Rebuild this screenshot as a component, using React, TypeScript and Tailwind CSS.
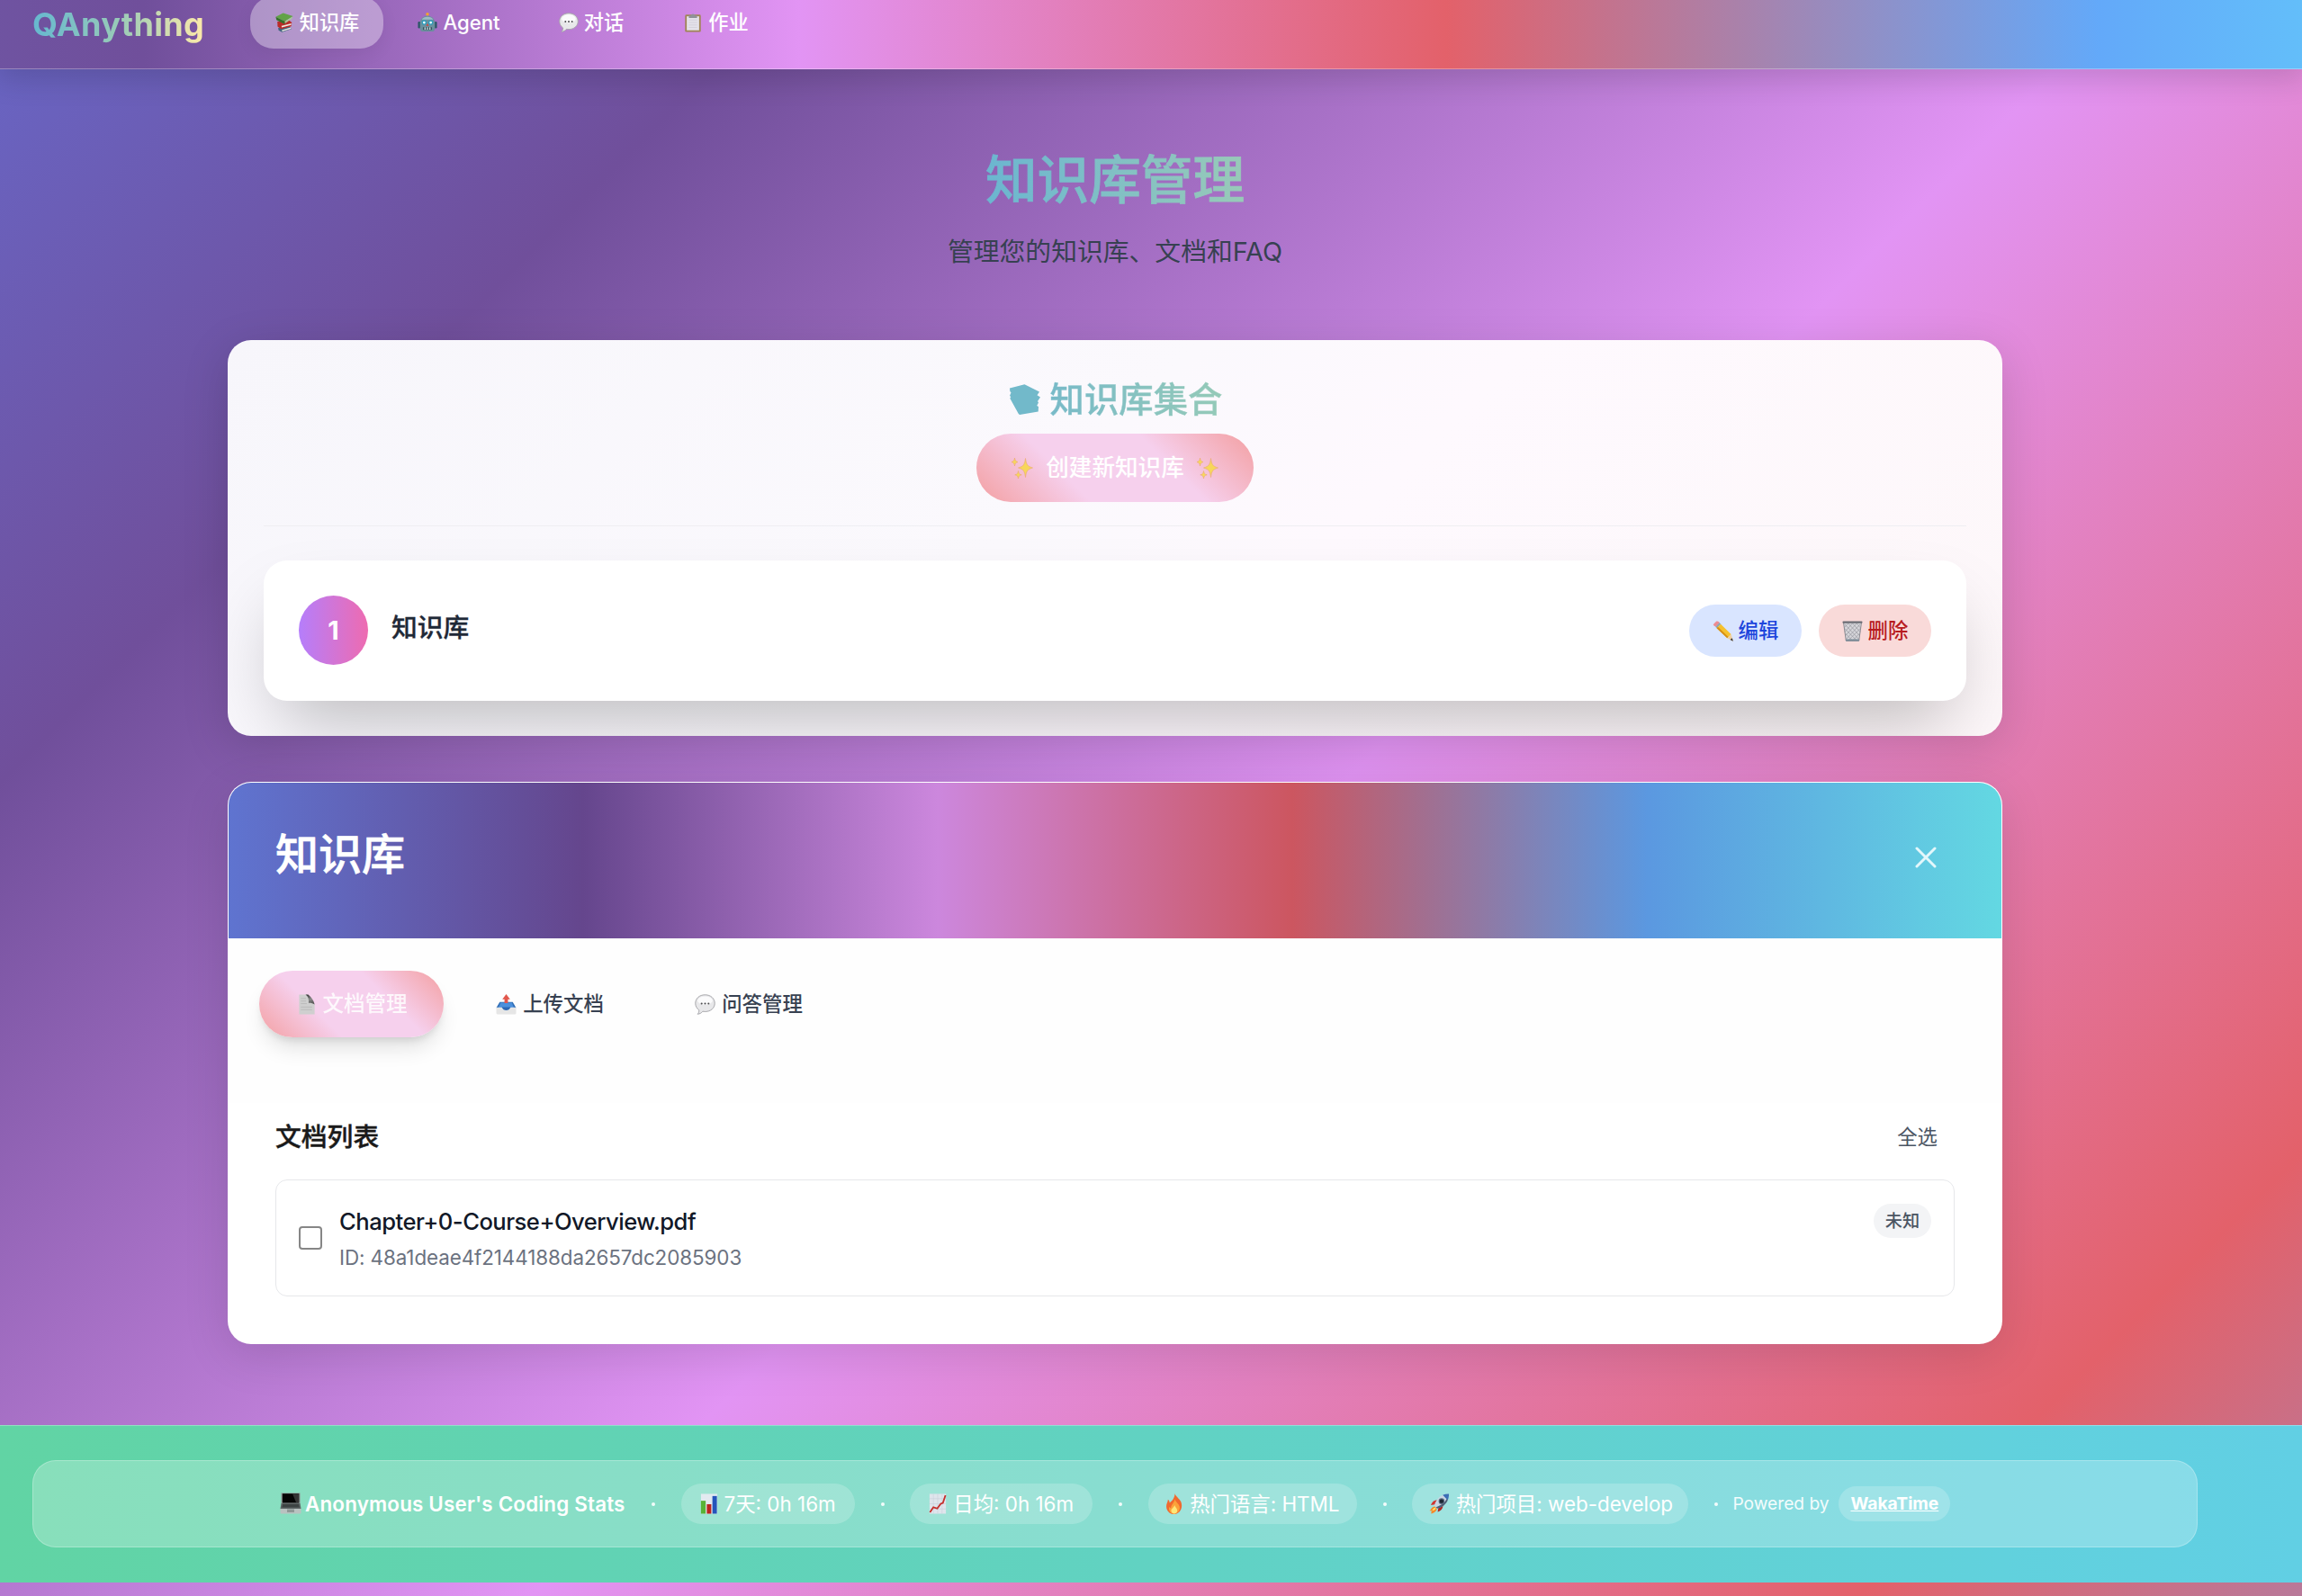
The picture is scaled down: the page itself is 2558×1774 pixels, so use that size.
import React from "react";

type IconProps = { className?: string };

const Books = ({ className }: IconProps) => (
  <svg viewBox="0 0 24 24" className={className}>
    <path d="M4.500 18.500 18 15.500l2.500 4.500L9 23.800 5 21.500z" fill="#41657f" />
    <path d="M9 21.200 19.500 18l.6 1.600L9.300 23z" fill="#e6e3dc" />
    <path d="M3.500 11 18 9.500l3 2.500-.8 4.500L8 19.800 3.800 17z" fill="#b92c29" />
    <path d="M8.500 16.200 20.500 13.200l-.4 1.800L8.800 18z" fill="#efe9df" />
    <path d="M1.500 5.200 10.500.5l12 3.800-10 6.400z" fill="#62a347" />
    <path d="M1.500 5.200 12.500 10.700v3.500L2.500 9z" fill="#35702a" />
    <path d="M12.500 10.700 22 4.800l-.8 2.600L12.900 13z" fill="#a9c79b" />
  </svg>
);

const Robot = ({ className }: IconProps) => (
  <svg viewBox="0 0 24 24" className={className}>
    <rect x="11.2" y="2" width="1.6" height="4" fill="#8a949b" />
    <circle cx="12" cy="2" r="1.9" fill="#f2a330" />
    <rect x="0.5" y="11" width="3" height="8" rx="1.4" fill="#2c5566" />
    <rect x="20.5" y="11" width="3" height="8" rx="1.4" fill="#2c5566" />
    <path d="M3 12a9 8 0 0 1 18 0v7a4 4 0 0 1-4 4H7a4 4 0 0 1-4-4z" fill="#6a909e" />
    <path d="M5 8.500a7.500 5 0 0 1 14 0z" fill="#9dbcc6" />
    <circle cx="8" cy="12" r="2.900" fill="#2f9dbd" />
    <circle cx="16" cy="12" r="2.900" fill="#2f9dbd" />
    <circle cx="8" cy="12" r="1.500" fill="#f0ffff" />
    <circle cx="16" cy="12" r="1.500" fill="#f0ffff" />
    <path d="m12 13 1.600 3h-3.200z" fill="#d2453a" />
    <rect x="6.500" y="17.500" width="11" height="3.600" rx="1" fill="#3a5661" />
    <path d="M9 17.800v3M12 17.800v3M15 17.800v3" stroke="#d6e6ea" strokeWidth="1.300" />
  </svg>
);

const Bubble = ({ className }: IconProps) => (
  <svg viewBox="0 0 24 24" className={className}>
    <path
      d="M12 .8C5.500.8.8 5 .8 10.600c0 3.400 1.600 6 4.200 7.900.2 1.900-.6 3.600-1.700 4.700 2.400-.1 4.600-1.400 6-3.200.9.2 1.800.3 2.700.3 6.500 0 11.200-4.200 11.200-9.700S18.500.8 12 .8z"
      fill="#e8e8ea"
      stroke="#a4a4a8"
      strokeWidth="1"
    />
    <ellipse cx="12" cy="7.500" rx="8.500" ry="5" fill="#fbfbfc" />
    <circle cx="8" cy="11" r="1.100" fill="#4c4c50" />
    <circle cx="12" cy="11" r="1.100" fill="#4c4c50" />
    <circle cx="16" cy="11" r="1.100" fill="#4c4c50" />
  </svg>
);

const Clipboard = ({ className }: IconProps) => (
  <svg viewBox="0 0 24 24" className={className}>
    <rect x="2.500" y="2.500" width="19" height="21" rx="1.500" fill="#a08556" />
    <rect x="4.500" y="4.500" width="15" height="17" fill="#e4e2ea" />
    <path d="M7 9h10M7 12h10M7 15h10M7 18h10" stroke="#d3d0da" strokeWidth="1" />
    <path d="M7 3.500h2.500a2.600 2.600 0 0 1 5 0H17V6.500H7z" fill="#8f9298" />
  </svg>
);

const Sparkles = ({ className }: IconProps) => (
  <svg viewBox="0 0 24 24" className={className} fill="#f8d94e" stroke="#eaaa6c" strokeWidth="0.700">
    <path d="M15.500 1.500c.9 6.500 2 8.800 8 10.500-6 1.700-7.100 4-8 10.500-.9-6.500-2-8.800-8-10.500 6-1.700 7.100-4 8-10.500z" />
    <path d="M3.500 1c.4 2.700 1 3.700 3.500 4.500-2.500.8-3.100 1.800-3.500 4.500C3.100 7.300 2.500 6.300 0 5.500 2.500 4.700 3.100 3.700 3.500 1z" />
    <path d="M7.500 15.500c.5 2.700 1 3.600 3.700 4.300-2.700.7-3.200 1.500-3.700 4.200-.5-2.700-1-3.500-3.700-4.200 2.700-.7 3.200-1.600 3.700-4.300z" />
  </svg>
);

const Pencil = ({ className }: IconProps) => (
  <svg viewBox="0 0 24 24" className={className}>
    <path d="M1.200 3.800 4.200.9c1-.7 2.300-.4 3.100.4l1 1L3.700 7l-1.600-1C1 5.300.6 4.500 1.200 3.800z" fill="#ee8c92" />
    <path d="M3.400 7 8 2.200l1.700 1.600L5 8.600z" fill="#8fa5b3" />
    <path d="M4.800 8.600 9.500 3.800 21.500 15.600 17 20z" fill="#f6c12d" />
    <path d="M4.800 8.600 6.200 7.100 18.400 18.700 17 20z" fill="#d68f16" />
    <path d="m21.500 15.600 2.300 8.100L17 20z" fill="#f0cf9e" />
    <path d="m22.800 20.200 1 3.500-3.400-1.800z" fill="#3d3a38" />
  </svg>
);

const Basket = ({ className }: IconProps) => (
  <svg viewBox="0 0 24 24" className={className}>
    <path d="M1.500 1.500h21L19.500 23h-15z" fill="#d6d6da" />
    <path
      d="M3 4l16 17M7 3l13 14M12 3l9 10M17 3l4 5M3 9l14 14M4 15l8 8M21 4 5 21M17 3 4 17M12 3 3 13M7 3 2.500 8M21 9 7 23M20 15l-8 8"
      stroke="#9a9aa2"
      strokeWidth="0.800"
    />
    <path d="M1.500 1.500 4.500 23h15l3-21.500" fill="none" stroke="#84858c" strokeWidth="1" />
    <rect x="0.500" y="0.500" width="23" height="2.300" rx="1" fill="#6b6d74" />
    <rect x="4" y="21.500" width="16" height="2.200" rx="1" fill="#7d8c98" />
  </svg>
);

const Page = ({ className }: IconProps) => (
  <svg viewBox="0 0 20 24" className={className}>
    <defs>
      <linearGradient id="curl" x1="0.300" y1="0" x2="0.600" y2="1">
        <stop offset="0" stopColor="#3c3c3c" />
        <stop offset="0.500" stopColor="#8a8a8a" />
        <stop offset="1" stopColor="#505050" />
      </linearGradient>
    </defs>
    <path d="M1 .5h10L19 12v11.500H1z" fill="#cfcfcf" />
    <path d="M3 5h6M3 8h6M3 11h7M3 15h13M3 18h13" stroke="#bababa" strokeWidth="1" />
    <path d="M8.500.5h3c3 2.500 6.500 6.500 7.500 11.500-2-1.500-4.500-2-7-1.800C12.500 6 11.500 2.500 8.500.5z" fill="url(#curl)" />
  </svg>
);

const Outbox = ({ className }: IconProps) => (
  <svg viewBox="0 0 24 24" className={className}>
    <path d="M4.500 9h15l4 7H.5z" fill="#2f6db5" />
    <path d="M5.500 10h13l2.500 6H3z" fill="#4c90dc" />
    <path d="M12 0 16.500 6H14v4.500h-4V6H7.500z" fill="#e2574c" />
    <path d="M.5 15.500h6.500c1 4 9 4 10 0h6.500V22a1.500 1.500 0 0 1-1.500 1.500H2A1.500 1.500 0 0 1 .5 22z" fill="#e6e6e6" />
    <path d="M7 15h10c-1.500 5-8.500 5-10 0z" fill="#2d68b4" />
  </svg>
);

const Laptop = ({ className }: IconProps) => (
  <svg viewBox="0 0 24 24" className={className}>
    <path d="M1.500.5h21V12h-21z" fill="#8c9292" />
    <path d="M2.800 1.200h18.400V11.500H2.800z" fill="#050505" />
    <path d="M14 1.200h7.200V11H18z" fill="#343434" />
    <path d="M1.500 12h21l1 6H.5z" fill="#5e6666" />
    <path d="M3 13h18l.7 3.500H2.300z" fill="#3d4343" />
    <path d="M.5 18h23v4.500a1 1 0 0 1-1 1h-21a1 1 0 0 1-1-1z" fill="#b9c2c0" />
    <rect x="8" y="18.500" width="8" height="3.500" fill="#8e9896" />
  </svg>
);

const BarChart = ({ className }: IconProps) => (
  <svg viewBox="0 0 20 24" className={className}>
    <path d="M.5.5h19v23H.5z" fill="#e2eaf0" />
    <rect x="0.500" y="8.500" width="5.500" height="15" fill="#58b336" />
    <rect x="7.300" y="12.500" width="5.200" height="11" fill="#bb2520" />
    <rect x="13.800" y="3" width="5.200" height="20.500" fill="#2455bb" />
  </svg>
);

const LineChart = ({ className }: IconProps) => (
  <svg viewBox="0 0 20 24" className={className}>
    <path d="M.5.5h19v23H.5z" fill="#dfe5ec" />
    <path d="M.5 6h19M.5 12h19M.5 18h19M5 .5v23M10 .5v23M15 .5v23" stroke="#c9d0da" strokeWidth="0.600" />
    <path d="M1 22l4-6 4.500 1.500L13.500 12l2.500-1L19 2" fill="none" stroke="#c5302c" strokeWidth="1.900" />
  </svg>
);

const Fire = ({ className }: IconProps) => (
  <svg viewBox="0 0 20 24" className={className}>
    <path
      d="M10.500 0c.8 3.500 5 5.500 7 9.500 2.800 6-.5 14-7.500 14.500-6.500 0-10.500-5.500-9-11.500.5-2 1.500-3 1.500-5.500 1.500 1 2 2.500 2 4C7.500 8.500 10.500 5 10.500 0z"
      fill="#f0692f"
    />
    <path d="M10.500 6.500c.5 3 4.500 5 5.500 9 .8 4-2 8-6 8.200-4.500 0-7.300-4-6-8.200.5 1 1.200 1.500 2 1.500 0-4 4-6 4.500-10.500z" fill="#fba23a" />
    <path d="M10.300 13.500c.5 2.500 3 3.500 3 6.300 0 2.200-1.500 3.700-3.500 3.700s-3.500-1.500-3.500-3.700c0-2.300 3.200-3.300 4-6.300z" fill="#fee779" />
  </svg>
);

const Rocket = ({ className }: IconProps) => (
  <svg viewBox="0 0 24 24" className={className}>
    <path d="M7.500 15c-4 0-4.500 3.500-6.500 5 1 .3 2 .2 2.500 0-.4 1.200-.6 2.500-.5 3.500 3-.8 6.500-2.500 6.500-6z" fill="#f58a2a" />
    <path d="M7.500 16.500c-2 .2-2.500 2-3.500 3.500 1.500-.3 3.500-.8 4.500-2.500z" fill="#ffe36b" />
    <path d="M11 7.500C7 7 4 9.500 2.500 13.500l5-.8z" fill="#d0342f" />
    <path d="M16.500 13c.5 4-2 7-6 8.500l.8-5z" fill="#b22622" />
    <path d="M23.500.5C16.500.3 9.500 4 6.500 14l3.500 3.500c10-3 13.700-10 13.500-17z" fill="#c9d6e4" />
    <path d="M23.500.5c-2.400-.1-4.900.3-7.200 1.300l5.900 5.900c1-2.300 1.400-4.800 1.300-7.200z" fill="#3b6fb5" />
    <path d="M22.200 7.700C20 12.500 16 16 10 17.500l-1.500-1.500C14.500 14 19 10.500 20.800 6.300z" fill="#4d6076" />
    <circle cx="15" cy="9" r="3.400" fill="#5a6b80" />
    <circle cx="15" cy="9" r="2.300" fill="#1c2733" />
  </svg>
);

const BooksShape = ({ className }: IconProps) => (
  <svg viewBox="0 0 34 34" className={className}>
    <path
      d="M0 4.500 16.500.3 33 8.500l-2.500 3.700L34 14.500l-3 4.500 1 1.500-1.800 3.500L32 25l-.3 5.500L11 34 9.800 33 .3 15.800l1-1.800L0 13l1.500-3.800L.3 8z"
      fill="#72b9ca"
    />
  </svg>
);

const navItems = [
  { label: "知识库", Icon: Books, cls: "w-[148px] bg-white/35 shadow-[0_6px_20px_rgba(0,0,0,0.06)]" },
  { label: "Agent", Icon: Robot, cls: "w-[142px]" },
  { label: "对话", Icon: Bubble, cls: "w-[126px]" },
  { label: "作业", Icon: Clipboard, cls: "w-[125px]" },
];

const stats = [
  { label: "7天: 0h 16m", Icon: BarChart, box: "w-[193px]", icon: "w-[20px]" },
  { label: "日均: 0h 16m", Icon: LineChart, box: "w-[203px]", icon: "w-[20px]" },
  { label: "热门语言: HTML", Icon: Fire, box: "w-[232px]", icon: "w-[20px]" },
  { label: "热门项目: web-develop", Icon: Rocket, box: "w-[307px]", icon: "w-[24px]" },
];

const Dot = () => <span className="h-[4px] w-[4px] shrink-0 rounded-full bg-white/90" />;

function Nav() {
  return (
    <nav className="relative z-10 flex h-[77px] shrink-0 items-start border-b border-white/30 bg-[linear-gradient(90deg,#6b62b5_-564px,#704f9b_160px,#e294f4_889px,#e3616a_1607px,#63a9f9_2333px,#63ecfc_3057px)] pl-[36px] shadow-[0_8px_32px_4px_rgba(0,0,0,0.14)]">
      <div className="mt-[2px] w-[242px] whitespace-nowrap text-[36px] leading-[50px] font-bold tracking-[0.35px]">
        <span className="inline-block bg-[linear-gradient(90deg,#66b8cf,#98cab8_50%,#fdeaa9)] bg-clip-text text-transparent">QAnything</span>
      </div>
      <div className="-mt-[4px] flex gap-[13px]">
        {navItems.map(({ label, Icon, cls }) => (
          <button key={label} className={`flex h-[58px] items-center justify-center gap-[6px] rounded-[26px] text-[22.200px] font-medium text-white ${cls}`}>
            <Icon className="h-[22px] w-[22px]" />
            <span>{label}</span>
          </button>
        ))}
      </div>
    </nav>
  );
}

function Collection() {
  return (
    <section className="flex h-[440px] flex-col overflow-hidden rounded-[26px] bg-[linear-gradient(135deg,#f7f6fb,#fbf9fd_45%,#fef9fe_60%,#fdf7f9)] px-[40px]">
      <div className="flex h-[207px] shrink-0 flex-col items-center border-b border-[#efeef2] pt-[40px]">
        <h2 className="flex h-[52px] items-center gap-[11px] pl-[2px] text-[38.4px] leading-[52px] font-medium">
          <BooksShape className="h-[34px] w-[34px]" />
          <span className="bg-[linear-gradient(90deg,#78bac8,#95cab8)] bg-clip-text text-transparent [-webkit-text-stroke:0.4px_transparent]">知识库集合</span>
        </h2>
        <button className="mt-[12px] flex h-[76px] w-[308px] items-center justify-center gap-[14px] rounded-full bg-[linear-gradient(45deg,#f39fa1,#f6d0ed_33.3%,#f6d0ed_66.600%,#f39fa1)] text-[25.6px] font-medium text-white">
          <Sparkles className="h-[24px] w-[24px] opacity-90" />
          <span>创建新知识库</span>
          <Sparkles className="h-[24px] w-[24px] opacity-90" />
        </button>
      </div>
      <div className="mt-[38px] flex h-[156px] shrink-0 items-center rounded-[26px] bg-white px-[39px] shadow-[0_40px_80px_-19px_rgba(0,0,0,0.25)]">
        <div className="mb-[1px] flex h-[77px] w-[77px] items-center justify-center rounded-full bg-[linear-gradient(90deg,#b57efb,#ee6bb0)] text-[28.8px] font-bold text-white">1</div>
        <h3 className="mb-[6px] ml-[26px] text-[28.8px] leading-[40px] font-medium text-[#1f2937] [-webkit-text-stroke:0.3px_#1f2937]">知识库</h3>
        <div className="ml-auto flex gap-[19px]">
          <button className="flex h-[58px] w-[125px] items-center justify-center gap-[6px] rounded-full bg-[#d9e5ff] text-[22.4px] font-medium text-[#1d45dc]">
            <Pencil className="h-[23px] w-[23px]" />
            编辑
          </button>
          <button className="flex h-[58px] w-[125px] items-center justify-center gap-[6px] rounded-full bg-[#f9dad9] text-[22.4px] font-medium text-[#b71b1f]">
            <Basket className="h-[23px] w-[23px]" />
            删除
          </button>
        </div>
      </div>
    </section>
  );
}

function Detail() {
  return (
    <section className="mt-[51px] flex h-[625px] flex-col overflow-hidden rounded-[26px] border border-white/90 bg-white shadow-[0_13px_51px_rgba(0,0,0,0.12)]">
      <header className="flex h-[173px] shrink-0 items-start justify-between bg-[linear-gradient(90deg,#5f74d0,#65468d_20%,#cc87dd_40%,#cc5660_60%,#5b98e0_80%,#63d8e2)] pt-[51px] pr-[72px] pl-[52px]">
        <h2 className="text-[48px] leading-[58px] font-medium text-white [-webkit-text-stroke:0.6px_#ffffff]">知识库</h2>
        <svg viewBox="0 0 24 24" className="mt-[20px] h-[24px] w-[24px]" fill="none" stroke="#e3f7fb" strokeWidth="3" strokeLinecap="round">
          <path d="M2 2 22 22M22 2 2 22" />
        </svg>
      </header>
      <div className="flex h-[183px] shrink-0 bg-[#fefefe] pt-[36px] pl-[34px]">
        <button className="flex h-[74px] w-[205px] items-center justify-center gap-[8px] rounded-full bg-[linear-gradient(45deg,#f39fa1,#f6d0ed_33.3%,#f6d0ed_66.600%,#f39fa1)] pl-[2px] text-[23.5px] font-medium text-white shadow-[0_16px_24px_-5px_rgba(0,0,0,0.12),0_6px_10px_-4px_rgba(0,0,0,0.12)]">
          <Page className="h-[23px] w-[20px]" />
          <span className="opacity-85">文档管理</span>
        </button>
        <button className="ml-[24px] flex h-[74px] w-[188px] items-center justify-center gap-[7px] text-[22.4px] font-medium text-[#374151]">
          <Outbox className="h-[23px] w-[23px]" />
          上传文档
        </button>
        <button className="ml-[33px] flex h-[74px] w-[188px] items-center justify-center gap-[7px] text-[22.4px] font-medium text-[#374151]">
          <Bubble className="h-[23px] w-[23px]" />
          问答管理
        </button>
      </div>
      <div className="px-[52px] pt-[15px]">
        <div className="flex h-[46px] items-center justify-between pr-[19px] text-[#4b5563]">
          <h3 className="text-[28.8px] leading-[40px] font-medium text-[#1a1a1a] [-webkit-text-stroke:0.4px_#1a1a1a]">文档列表</h3>
          <span className="text-[22.4px] leading-[32px]">全选</span>
        </div>
        <div className="mt-[24px] flex h-[130px] items-center rounded-[13px] border border-[#e6e7ea] px-[25px]">
          <span className="h-[26px] w-[26px] shrink-0 rounded-[4px] border-2 border-[#868686] bg-white" />
          <div className="ml-[19px]">
            <p className="text-[25.600px] leading-[38px] font-medium tracking-[-0.520px] text-[#111827]">Chapter+0-Course+Overview.pdf</p>
            <p className="mt-[5px] text-[22.400px] leading-[32px] tracking-[-0.080px] text-[#6b7280]">ID: 48a1deae4f2144188da2657dc2085903</p>
          </div>
          <span className="mb-[38px] ml-auto flex h-[38px] w-[64px] items-center justify-center rounded-full bg-[#f3f4f6] text-[19.2px] font-medium text-[#4b5563]">
            未知
          </span>
        </div>
      </div>
    </section>
  );
}

function Footer() {
  return (
    <footer className="mt-[90px] h-[175px] shrink-0 border-t border-white/30 bg-[linear-gradient(90deg,#61d4a4,#61d2c2_50%,#61d1dd_87%,#61cfe4)] pt-[38px] pr-[116px] pl-[36px]">
      <div className="flex h-[97px] items-center rounded-[26px] border border-white/25 bg-white/25 pl-[274px] text-[22.4px] whitespace-nowrap text-white">
        <div className="flex w-[413px] shrink-0 items-center gap-[4px] font-semibold tracking-[0.180px]">
          <Laptop className="h-[24px] w-[24px]" />
          Anonymous User's Coding Stats
        </div>
        {stats.map(({ label, Icon, box, icon }) => (
          <React.Fragment key={label}>
            <Dot />
            <div className={`mr-[29px] ml-[28.600px] flex h-[45px] shrink-0 items-center justify-center gap-[7px] rounded-full bg-white/20 ${box}`}>
              <Icon className={`h-[23px] ${icon}`} />
              <span>{label}</span>
            </div>
          </React.Fragment>
        ))}
        <Dot />
        <span className="ml-[16px] w-[118px] shrink-0 text-[19.2px] text-white/90">Powered by</span>
        <a className="flex h-[39px] w-[124px] shrink-0 items-center justify-center rounded-full bg-white/20 text-[19.2px] font-bold underline">WakaTime</a>
      </div>
    </footer>
  );
}

export default function App() {
  return (
    <div className="flex h-[1774px] w-full flex-col overflow-hidden bg-[linear-gradient(135deg,#6376e3_-435px,#704f9b_615px,#e294f4_1671px,#e3616a_2715px,#63a9f9_3765px)] font-['Inter','Noto_Sans_CJK_SC',sans-serif]">
      <Nav />
      <main className="flex flex-col pr-[333px] pl-[253px]">
        <div className="flex h-[301px] shrink-0 flex-col items-center pt-[85px]">
          <h1 className="bg-[linear-gradient(90deg,#6bb6d0,#98cab8)] bg-clip-text text-[57.6px] leading-[76px] font-medium text-transparent [-webkit-text-stroke:0.8px_transparent]">知识库管理</h1>
          <p className="mt-[22px] text-[28.8px] leading-[40px] text-[#374151]">管理您的知识库、文档和FAQ</p>
        </div>
        <div className="rounded-[26px] shadow-[0_13px_51px_rgba(0,0,0,0.15)]">
          <Collection />
        </div>
        <Detail />
      </main>
      <Footer />
    </div>
  );
}
